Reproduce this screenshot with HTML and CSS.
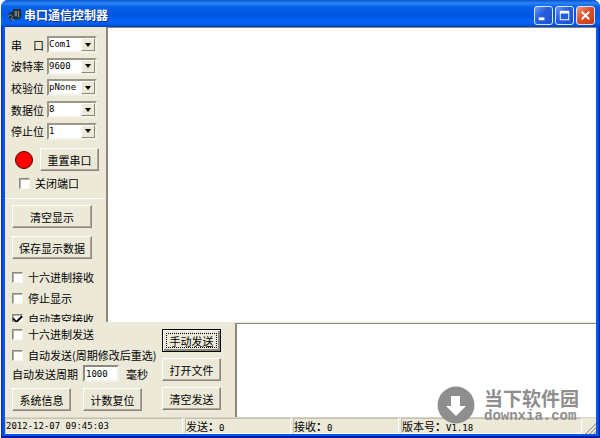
FILE: index.html
```html
<!DOCTYPE html>
<html lang="zh-CN">
<head>
<meta charset="utf-8">
<title>串口通信控制器</title>
<link rel="stylesheet" href="styles.css">
</head>
<body>
<div class="window">
  <header class="titlebar">
    <svg class="app-icon" viewBox="0 0 16 16" aria-hidden="true">
      <path d="M1 8l2-3 3-1 1-3h8v9l-3 2H7L4 14z" fill="#1d2a38"/>
      <path d="M8 3h3v6H8z" fill="#6a7a78"/><path d="M12 3h1v7h-1z" fill="#b39b50"/>
      <path d="M1 9l3-2 2 2-2 4M5 12l3 1" fill="none" stroke="#8a9298"/>
    </svg>
    <h1>串口通信控制器</h1>
    <div class="caption-buttons">
      <button type="button" aria-label="最小化"><svg viewBox="0 0 18 18"><path d="M4 11h6v3H4z" fill="#fff"/></svg></button>
      <button type="button" aria-label="最大化"><svg viewBox="0 0 18 18"><path d="M4 4h10v10H4zM5 7v6h8V7z" fill="#fff" fill-rule="evenodd"/></svg></button>
      <button type="button" class="close" aria-label="关闭"><svg viewBox="0 0 18 18"><path d="M5 5l8 8M13 5l-8 8" stroke="#fff" stroke-width="2"/></svg></button>
    </div>
  </header>

  <main class="client">
    <div class="upper">
      <aside class="sidebar">
        <section class="port">
          <div class="fields">
            <label for="port" class="spread"><span>串</span><span>口</span></label>
            <div class="combo"><select id="port"><option>Com1</option></select><span class="arrow"></span></div>
            <label for="baud">波特率</label>
            <div class="combo"><select id="baud"><option>9600</option></select><span class="arrow"></span></div>
            <label for="parity">校验位</label>
            <div class="combo"><select id="parity"><option>pNone</option></select><span class="arrow"></span></div>
            <label for="data">数据位</label>
            <div class="combo"><select id="data"><option>8</option></select><span class="arrow"></span></div>
            <label for="stop">停止位</label>
            <div class="combo"><select id="stop"><option>1</option></select><span class="arrow"></span></div>
          </div>
          <div class="reset">
            <span class="lamp"></span>
            <button type="button" class="btn">重置串口</button>
          </div>
          <label class="check close-port"><input type="checkbox">关闭端口</label>
        </section>
        <section class="display">
          <button type="button" class="btn wide">清空显示</button>
          <button type="button" class="btn wide">保存显示数据</button>
          <div class="checks">
            <label class="check"><input type="checkbox">十六进制接收</label>
            <label class="check"><input type="checkbox">停止显示</label>
            <label class="check"><input type="checkbox" checked>自动清空接收</label>
          </div>
        </section>
      </aside>
      <textarea class="memo" aria-label="接收数据"></textarea>
    </div>

    <div class="lower">
      <section class="send">
        <div class="send-options">
          <label class="check"><input type="checkbox">十六进制发送</label>
          <label class="check"><input type="checkbox">自动发送(周期修改后重选)</label>
          <div class="period">
            <label for="period">自动发送周期</label>
            <input id="period" type="text" value="1000">
            <span>毫秒</span>
          </div>
          <div class="pair">
            <button type="button" class="btn">系统信息</button>
            <button type="button" class="btn">计数复位</button>
          </div>
        </div>
        <div class="send-buttons">
          <button type="button" class="btn default">手动发送</button>
          <button type="button" class="btn">打开文件</button>
          <button type="button" class="btn">清空发送</button>
        </div>
      </section>
      <textarea class="memo" aria-label="发送数据"></textarea>
    </div>
  </main>

  <footer class="statusbar">
    <span class="num">2012-12-07 09:45:03</span>
    <span>发送<i>：</i><b class="num">0</b></span>
    <span>接收<i>：</i><b class="num">0</b></span>
    <span>版本号<i>：</i><b class="num">V1.18</b></span>
    <svg class="grip" viewBox="0 0 12 12" aria-hidden="true">
      <path d="M1 12L12 1M5 12l7-7M9 12l3-3" stroke="#aca899" stroke-width="2"/>
      <path d="M0 12L12 0M4 12l8-8M8 12l4-4" stroke="#fff"/>
    </svg>
  </footer>

  <div class="watermark">
    <svg viewBox="0 0 38 38" aria-hidden="true">
      <circle cx="19" cy="19" r="18.500" fill="#8e8e8e"/>
      <path d="M14 10h9v10h6L19 30 9 20h5z" fill="#fff"/>
    </svg>
    <div>
      <strong>当下软件园</strong>
      <span>downxia.com</span>
    </div>
  </div>
</div>
</body>
</html>
```
FILE: styles.css
```css
* { box-sizing: border-box; }

body {
  margin: 0;
  background: #fff;
  color: #000;
  font: 11px/16px "Noto Sans CJK SC", sans-serif;
}

button, input, select, textarea { font: inherit; color: inherit; margin: 0; }

.window {
  position: relative;
  display: flex;
  flex-direction: column;
  min-height: 100vh;
  margin-left: 1px;
  padding: 0 4px 4px;
  border-radius: 7px 7px 0 0;
  background: linear-gradient(to right, #0831d9 1px, #0855e8 2px, #0855e8 calc(100% - 2px), #0019a8);
  box-shadow: inset 0 -2px #001ea0;
}

.titlebar {
  display: flex;
  align-items: center;
  height: 27px;
  margin: 0 -4px;
  padding: 3px 5px 0 6px;
  border-radius: 7px 7px 0 0;
  background: linear-gradient(#0a4fd0, #2b85f5 3px, #0560e8 7px, #0055e0 15px, #0464f8 22px, #0050d8 26px, #0038b0);
}
.app-icon { width: 15px; height: 15px; }
h1 { flex: 1; margin: 0 0 0 2px; color: #fff; font-size: 12px; font-weight: 700; text-shadow: 1px 1px #08308c; }
.caption-buttons { display: flex; gap: 2px; }
.caption-buttons button {
  width: 19px; height: 19px; padding: 0;
  border: 1px solid #d8e4fc; border-radius: 3px;
  background: linear-gradient(135deg, #6b9bf8, #2860e0 40%, #1a50d0);
}
.caption-buttons .close { background: linear-gradient(135deg, #f09a80, #dc5028 45%, #c83c10); }
.caption-buttons svg { display: block; width: 17px; height: 17px; }

.client { flex: 1; display: flex; flex-direction: column; background: #ece9d8; }
.upper { flex: 1 1 0; display: flex; min-height: 0; }

.sidebar { width: 101px; height: 295px; overflow: hidden; }
.port { height: 172px; margin-right: 1px; padding: 7px 0 0 6px; border-bottom: 1px solid #fff; }
.fields { display: grid; grid-template-columns: 36px 50px; grid-auto-rows: 1fr; align-items: center; height: 108px; }
.spread { display: flex; justify-content: space-between; width: 33px; }
.combo { display: flex; height: 17px; border: 2px solid; border-color: #9a9688 #f4f2e8 #f4f2e8 #9a9688; background: #fff; }
.combo select {
  flex: 1; width: 0; padding: 0; border: 0; outline: 0; appearance: none; overflow: visible;
  background: #fff; font: 9px/13px "DejaVu Sans Mono", monospace;
}
.arrow {
  display: grid; place-items: center; width: 14px;
  border: 1px solid; border-color: #fff #8c897c #8c897c #fff; background: #ece9d8;
}
.arrow::before { content: ""; border: solid transparent; border-width: 4px 3px 0; border-top-color: #000; }

.btn {
  width: 59px; height: 23px; padding: 0;
  border: 1px solid; border-color: #fff #8c897c #8c897c #fff;
  background: #ece9d8; box-shadow: inset -1px -1px #aca899;
  line-height: 18px; white-space: nowrap;
}
.btn.wide { display: block; width: 80px; }
.btn.default { border-color: #000; outline: 1px dotted #000; outline-offset: -5px; box-shadow: inset 1px 1px #fff, inset -2px -2px #8c897c; }

.reset { display: flex; align-items: center; gap: 7px; padding: 6px 0 0 4px; }
.lamp { width: 18px; height: 18px; border: 1px solid #400; border-radius: 50%; background: #f00; }
.close-port { padding: 4px 0 0 8px; }

.check { display: flex; align-items: center; gap: 5px; white-space: nowrap; }
.check input {
  flex: none;
  display: grid; place-items: center;
  width: 11px; height: 11px; appearance: none;
  border: 1px solid; border-color: #8c897c #f8f6ee #f8f6ee #8c897c; background: #fff;
  box-shadow: inset 1px 1px #b4b0a4;
}
.check input:checked::before {
  content: ""; width: 7px; height: 4px; border: solid #000; border-width: 0 0 2px 2px;
  transform: translateY(-1px) rotate(-45deg);
}

.display { display: grid; gap: 8px; padding: 6px 0 0 7px; }
.checks { display: grid; gap: 5px; padding-top: 2px; }

.memo {
  flex: 1; width: 0; min-width: 0; resize: none; outline: 0;
  border: 0 solid #8c897c; border-width: 1px 0 0 2px; background: #fff;
}

.lower { display: flex; height: 94px; margin-top: 1px; }
.send { display: flex; gap: 7px; width: 230px; padding: 3px 0 0 7px; }
.send-options { display: flex; flex-direction: column; width: 143px; gap: 5px; }
.period { display: flex; align-items: center; height: 17px; margin-top: -3px; }
.period label { width: 71px; }
.period input {
  width: 36px; height: 17px; margin-right: 7px; padding: 0 1px;
  border: 2px solid; border-color: #8c897c #f4f2e8 #f4f2e8 #8c897c; background: #fff;
  font: 9px/13px "DejaVu Sans Mono", monospace;
}
.pair { display: flex; gap: 12px; margin-top: 1px; }
.send-buttons { display: grid; align-content: start; gap: 6px; padding-top: 3px; }

.statusbar { display: flex; gap: 2px; height: 17px; background: #ece9d8; border-top: 1px solid #d8d4c4; }
.statusbar > span { border: 1px solid; border-color: #c4c0b0 #fff #fff #c4c0b0; flex: 0 0 106px; line-height: 14px; white-space: nowrap; }
.statusbar > span:first-child { flex-basis: 178px; }
.statusbar > span:nth-child(4) { flex: 1; }
.statusbar i { font-family: "Noto Sans CJK TC", sans-serif; font-style: normal; font-weight: 700; }
.statusbar .num { font: 9px/14px "DejaVu Sans Mono", monospace; }
.grip { width: 12px; height: 12px; align-self: end; }

/* Site mark floats over the send box and status bar. */
.watermark {
  position: absolute; right: 21px; bottom: 14px;
  display: flex; align-items: center; gap: 9px;
  color: #8e8e8e; pointer-events: none;
}
.watermark svg { width: 38px; height: 38px; }
.watermark div { display: grid; }
.watermark strong { font-size: 19px; line-height: 22px; font-weight: 700; }
.watermark span { font: bold 14px/14px "Liberation Mono", monospace; }
```
